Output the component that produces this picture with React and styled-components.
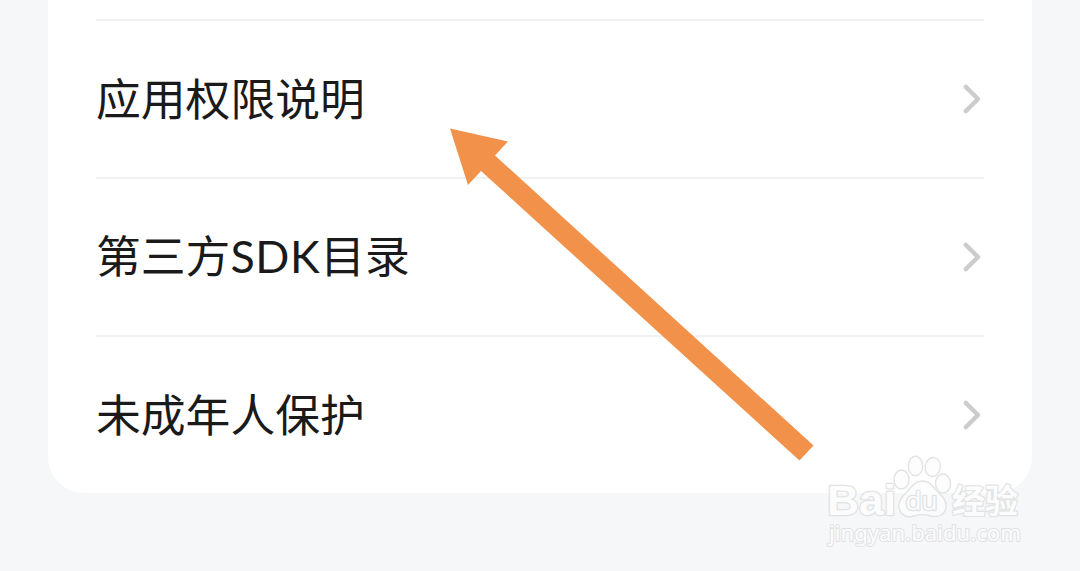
import React from "react";
import styled, { createGlobalStyle } from "styled-components";

const GlobalStyle = createGlobalStyle`
  * { box-sizing: border-box; }
  body { margin: 0; background: #f5f7f9; overflow: hidden; }
`;

const Page = styled.main`
  position: relative;
  height: 571px;
  padding: 0 48px;
  background: #f5f7f9;
  font-family: "Noto Sans CJK SC", sans-serif;
`;

const Card = styled.ul`
  margin: 0;
  padding: 19px 48px 0;
  height: 493px;
  list-style: none;
  background: #fff;
  border-radius: 0 0 36px 36px;
`;

const Row = styled.li`
  display: flex;
  align-items: center;
  justify-content: space-between;
  height: 158px;
  border-top: 2px solid #f1f1f2;
`;

const Label = styled.span`
  padding-bottom: 5px;
  font-size: 44.8px;
  line-height: 64px;
  color: #1a1a1a;
  white-space: nowrap;
`;

const Latin = styled.span`
  font-family: Lato, sans-serif;
  letter-spacing: 0.6px;
`;

const Chevron = styled.svg`
  flex: none;
  width: 24px;
  height: 32px;
`;

const Overlay = styled.svg`
  position: absolute;
  left: 0;
  top: 0;
  pointer-events: none;
`;

const Mark = styled.g`
  fill: #fdfdfe;
  stroke: #dfe0e1;
  stroke-width: 1.4px;
  stroke-linejoin: round;
  opacity: 0.9;
`;

const MarkText = styled.text`
  font-family: ${(p) => p.$font}, sans-serif;
  font-weight: ${(p) => p.$weight};
  font-size: ${(p) => p.$size}px;
  stroke-width: ${(p) => p.$outline}px;
  paint-order: stroke;
`;

const items = [
  { key: "permissions", label: "应用权限说明" },
  { key: "sdk", label: <>第三方<Latin>SDK</Latin>目录</> },
  { key: "minors", label: "未成年人保护" },
];

function Watermark() {
  return (
    <Mark>
      <MarkText x="827" y="515" textLength="69" lengthAdjust="spacingAndGlyphs" $font='"Liberation Sans"' $weight={700} $size={43} $outline={2.4}>Bai</MarkText>
      <ellipse cx="901.500" cy="479.500" rx="7.500" ry="9.500" />
      <ellipse cx="915.500" cy="466" rx="7.200" ry="9.800" />
      <ellipse cx="932.700" cy="467" rx="7.500" ry="9.500" transform="rotate(8 932.700 467)" />
      <ellipse cx="943" cy="483.500" rx="7.500" ry="9.500" />
      <path d="M922 481C914 481 911 488 906 493C900 498 898 502 899 508C901 516 908 518 914 516C920 514 925 514 931 516C939 518 946 514 946 506C946 499 942 496 937 491C932 486 930 481 922 481Z" />
      <MarkText x="905.500" y="510" textLength="32" lengthAdjust="spacingAndGlyphs" $font='"Open Sans"' $weight={500} $size={25} $outline={2.6}>du</MarkText>
      <MarkText x="952" y="513" textLength="66" lengthAdjust="spacingAndGlyphs" $font='"Noto Sans CJK SC"' $weight={700} $size={33} $outline={2.4}>经验</MarkText>
      <MarkText x="829" y="541" textLength="192" lengthAdjust="spacingAndGlyphs" $font='"Noto Sans"' $weight={400} $size={22.5} $outline={2}>jingyan.baidu.com</MarkText>
    </Mark>
  );
}

export default function App() {
  return (
    <>
      <GlobalStyle />
      <Page>
        <Card>
          {items.map((item) => (
            <Row key={item.key}>
              <Label>{item.label}</Label>
              <Chevron viewBox="0 0 24 32" fill="none" stroke="#ccc" strokeWidth="4.4" strokeLinecap="round" strokeLinejoin="round">
                <path d="M5.800 3.900L18 16L5.800 28.100" />
              </Chevron>
            </Row>
          ))}
        </Card>
        <Overlay width="1080" height="571" viewBox="0 0 1080 571">
          <path d="M450 128.500L508 141.500L495 155.500L813.500 445.500L799.500 460.500L481 171L468 185Z" fill="#f29149" />
          <Watermark />
        </Overlay>
      </Page>
    </>
  );
}
